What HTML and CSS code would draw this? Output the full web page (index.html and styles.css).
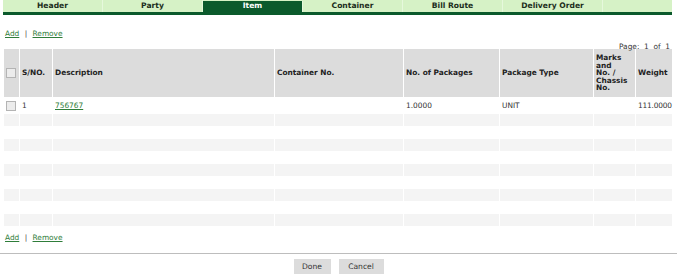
FILE: index.html
```html
<!DOCTYPE html>
<html lang="en">
<head>
  <meta charset="UTF-8" />
  <title>Item</title>
  <link rel="stylesheet" href="styles.css">
</head>
<body>
  <div class="tabs">
    <div class="tab">Header</div>
    <div class="tab">Party</div>
    <div class="tab active">Item</div>
    <div class="tab">Container</div>
    <div class="tab">Bill Route</div>
    <div class="tab">Delivery Order</div>
    <div class="tab last"></div>
  </div>

  <div class="actions top">
    <a href="#">Add</a> <span class="sep">|</span> <a href="#">Remove</a>
  </div>
  <div class="pager">Page: &nbsp;1 &nbsp;of &nbsp;1</div>

  <table class="grid">
    <thead>
      <tr>
        <th class="c-check"><span class="box"></span></th>
        <th class="c-sno">S/NO.</th>
        <th class="c-desc">Description</th>
        <th class="c-cont">Container No.</th>
        <th class="c-pkg">No. of Packages</th>
        <th class="c-type">Package Type</th>
        <th class="c-marks">Marks<br>and<br>No. /<br>Chassis<br>No.</th>
        <th class="c-weight">Weight</th>
      </tr>
    </thead>
    <tbody>
      <tr class="data">
        <td><span class="box"></span></td>
        <td>1</td>
        <td><a href="#">756767</a></td>
        <td></td>
        <td>1.0000</td>
        <td>UNIT</td>
        <td></td>
        <td class="num">111.0000</td>
      </tr>
      <tr class="alt"><td></td><td></td><td></td><td></td><td></td><td></td><td></td><td></td></tr>
      <tr class="empty"><td></td><td></td><td></td><td></td><td></td><td></td><td></td><td></td></tr>
      <tr class="alt"><td></td><td></td><td></td><td></td><td></td><td></td><td></td><td></td></tr>
      <tr class="empty"><td></td><td></td><td></td><td></td><td></td><td></td><td></td><td></td></tr>
      <tr class="alt"><td></td><td></td><td></td><td></td><td></td><td></td><td></td><td></td></tr>
      <tr class="empty"><td></td><td></td><td></td><td></td><td></td><td></td><td></td><td></td></tr>
      <tr class="alt"><td></td><td></td><td></td><td></td><td></td><td></td><td></td><td></td></tr>
      <tr class="empty"><td></td><td></td><td></td><td></td><td></td><td></td><td></td><td></td></tr>
      <tr class="alt"><td></td><td></td><td></td><td></td><td></td><td></td><td></td><td></td></tr>
    </tbody>
  </table>

  <div class="actions bottom">
    <a href="#">Add</a> <span class="sep">|</span> <a href="#">Remove</a>
  </div>

  <div class="footer">
    <button class="btn">Done</button>
    <button class="btn">Cancel</button>
  </div>
</body>
</html>
```

FILE: styles.css
```css
body {
  margin: 0;
  font-family: "DejaVu Sans", Verdana, sans-serif;
  font-size: 7.4px;
  color: #222;
  background: #fff;
}

a {
  color: #2f7d3a;
}

/* Tabs */
.tabs {
  display: flex;
  margin: 0 5px 0 3px;
  height: 12px;
  background: #d6f2c6;
  border-bottom: 3px solid #0b5a2c;
}

.tab {
  width: 100px;
  text-align: center;
  font-weight: bold;
  font-size: 7.6px;
  line-height: 12px;
  color: #1c2e1c;
  border-right: 1px solid #e6f8dc;
  box-sizing: border-box;
}

.tab.active {
  background: #0b5a2c;
  color: #fff;
  margin: 1px 0 0;
  line-height: 10px;
  height: 11px;
}

.tab.last {
  flex: 1;
  border-right: none;
}

/* Links row */
.actions {
  padding-left: 5px;
  color: #444;
}

.actions.top {
  margin-top: 14px;
  line-height: 10px;
}

.sep {
  margin: 0 3px;
}

.pager {
  text-align: right;
  padding-right: 7px;
  line-height: 10px;
  margin-top: 3px;
  color: #333;
}

/* Grid */
.grid {
  width: 670px;
  margin: -3px 0 0 3px;
  border-collapse: separate;
  border-spacing: 1px 0;
  table-layout: fixed;
}

.grid th {
  background: #dcdcdc;
  height: 48px;
  text-align: left;
  font-weight: bold;
  line-height: 7.5px;
  padding: 0 2px;
  color: #222;
}

.c-check { width: 11px; }
.c-sno { width: 28px; }
.c-cont { width: 124px; }
.c-pkg { width: 91px; }
.c-type { width: 89px; }
.c-marks { width: 38px; }
.grid th.c-marks { padding-right: 1px; }
.c-weight { width: 32px; }

.grid td {
  padding: 0 2px;
  color: #333;
}

.grid tr.data td {
  height: 17px;
  vertical-align: middle;
}

.grid tr.alt td {
  height: 12px;
  background: #f4f4f4;
}

.grid tr.empty td {
  height: 13px;
}

.grid td.num {
  text-align: right;
  padding-right: 1px;
  letter-spacing: -0.2px;
}

.box {
  display: inline-block;
  width: 8px;
  height: 8px;
  border: 1px solid #b4b4b4;
  background: #ececec;
  vertical-align: middle;
}

.actions.bottom {
  margin-top: 7px;
  line-height: 10px;
}

.footer {
  margin-top: 10px;
  border-top: 1px solid #bdbdbd;
  padding-top: 5px;
  display: flex;
  justify-content: center;
  gap: 8px;
}

.btn {
  font-family: "DejaVu Sans", Verdana, sans-serif;
  font-size: 7.6px;
  background: #dcdcdc;
  border: none;
  color: #333;
  height: 15px;
  padding: 0;
}

.btn:first-child { width: 37px; }
.btn:last-child { width: 45px; }
```
